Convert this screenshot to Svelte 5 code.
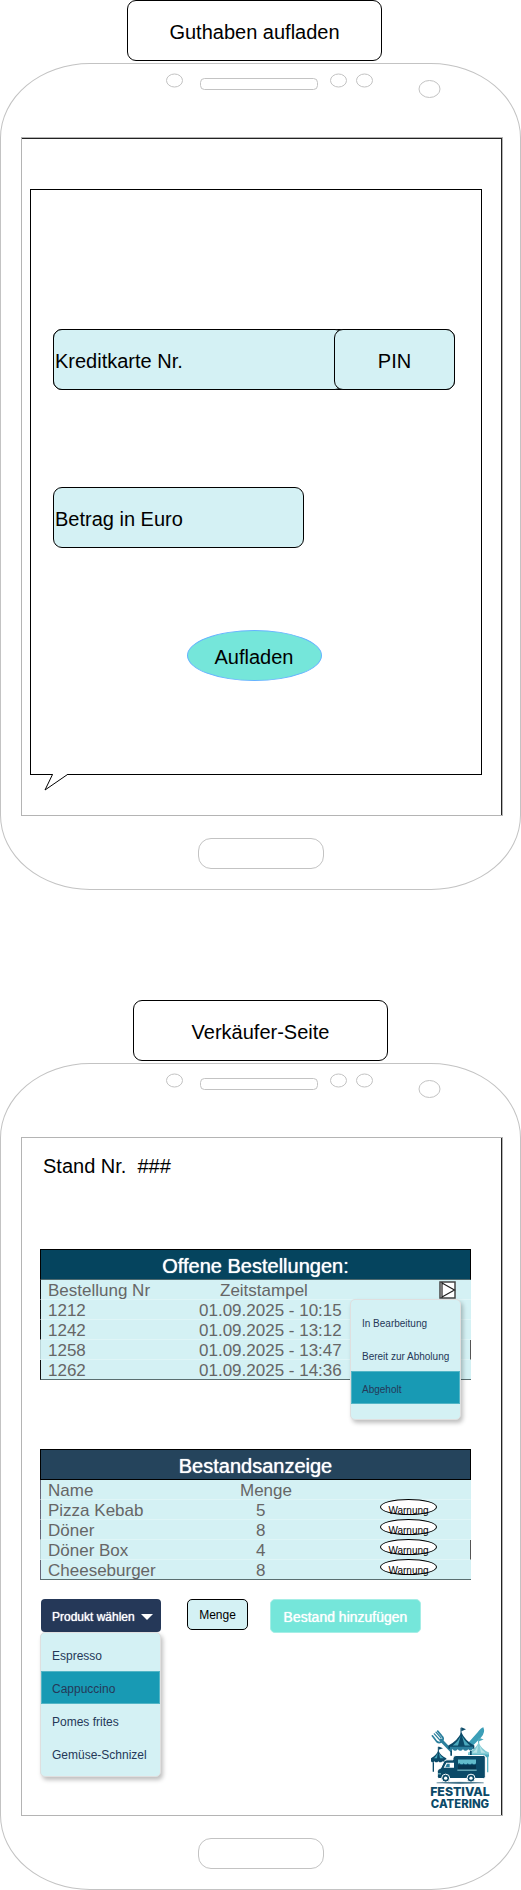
<script>
  const orders = [
    { nr: '1212', time: '01.09.2025 - 10:15' },
    { nr: '1242', time: '01.09.2025 - 13:12' },
    { nr: '1258', time: '01.09.2025 - 13:47' },
    { nr: '1262', time: '01.09.2025 - 14:36' }
  ];
  const stock = [
    { name: 'Pizza Kebab', amount: 5 },
    { name: 'Döner', amount: 8 },
    { name: 'Döner Box', amount: 4 },
    { name: 'Cheeseburger', amount: 8 }
  ];
  const statuses = ['In Bearbeitung', 'Bereit zur Abholung', 'Abgeholt'];
  const products = ['Espresso', 'Cappuccino', 'Pomes frites', 'Gemüse-Schnizel'];

  let statusOpen = $state(true);
  let status = $state('Abgeholt');
  let productOpen = $state(true);
  let product = $state('Cappuccino');
</script>

{#snippet sensors()}
  <svg class="sensors" viewBox="0 0 519 73" aria-hidden="true">
    <g fill="#fff" stroke="#c3c3c3">
      <ellipse cx="173.5" cy="16.5" rx="8" ry="6.5" />
      <rect x="199.5" y="14.5" width="117" height="11" rx="4" />
      <ellipse cx="337.5" cy="16.5" rx="8" ry="6.5" />
      <ellipse cx="363.5" cy="16.5" rx="8" ry="6.5" />
      <ellipse cx="428.5" cy="25" rx="10.5" ry="8.5" />
    </g>
  </svg>
{/snippet}

<main>
  <section>
    <h1 class="title first">Guthaben aufladen</h1>
    <div class="phone">
      {@render sensors()}
      <div class="screen dark-top">
        <form class="bubble" onsubmit={(e) => e.preventDefault()}>
          <div class="card-row">
            <input class="field" type="text" placeholder="Kreditkarte Nr." aria-label="Kreditkarte Nr." />
            <input class="field pin" type="text" placeholder="PIN" aria-label="PIN" />
          </div>
          <input class="field amount" type="text" placeholder="Betrag in Euro" aria-label="Betrag in Euro" />
          <button class="charge" type="submit">Aufladen</button>
          <svg class="tail" width="26" height="18" viewBox="0 0 26 18" aria-hidden="true">
            <path d="M9 0H23V2H9z" fill="#fff" />
            <path d="M8.500 1.500L1 17L23.500 1.500" fill="#fff" stroke="#000" />
          </svg>
        </form>
      </div>
      <div class="home"></div>
    </div>
  </section>

  <section>
    <h1 class="title">Verkäufer-Seite</h1>
    <div class="phone">
      {@render sensors()}
      <div class="screen seller">
        <p class="stand">Stand Nr.&nbsp; ###</p>

        <div class="orders">
          <table>
            <colgroup><col class="order-nr" /><col /><col class="order-status" /></colgroup>
            <thead>
              <tr><th class="head" colspan="3">Offene Bestellungen:</th></tr>
              <tr class="cols">
                <th>Bestellung Nr</th>
                <th class="stamp">Zeitstampel</th>
                <th></th>
              </tr>
            </thead>
            <tbody>
              {#each orders as o}
                <tr><td>{o.nr}</td><td>{o.time}</td><td></td></tr>
              {/each}
            </tbody>
          </table>
          <div class="status">
            <button class="play" type="button" aria-label="Status" aria-expanded={statusOpen} onclick={() => (statusOpen = !statusOpen)}>
              <svg width="17" height="18" viewBox="0 0 17 18" aria-hidden="true">
                <rect x="1" y="1" width="15" height="16" fill="#fff" stroke="#444" stroke-width="1.500" />
                <path d="M3 1V17M3 2L15.500 9L3 16" fill="none" stroke="#222" stroke-width="1.200" />
              </svg>
            </button>
            {#if statusOpen}
              <ul class="menu small">
                {#each statuses as s}
                  <li><button type="button" class:active={s === status} onclick={() => (status = s)}>{s}</button></li>
                {/each}
              </ul>
            {/if}
          </div>
        </div>

        <table class="stock">
          <colgroup><col class="item" /><col /><col class="item-state" /></colgroup>
          <thead>
            <tr><th class="head" colspan="3">Bestandsanzeige</th></tr>
            <tr class="cols">
              <th>Name</th>
              <th class="amount-head">Menge</th>
              <th></th>
            </tr>
          </thead>
          <tbody>
            {#each stock as s}
              <tr>
                <td>{s.name}</td>
                <td class="num">{s.amount}</td>
                <td class="warn-cell"><span class="warn">Warnung</span></td>
              </tr>
            {/each}
          </tbody>
        </table>

        <div class="toolbar">
          <div class="picker">
            <button class="pick" type="button" aria-expanded={productOpen} onclick={() => (productOpen = !productOpen)}>
              Produkt wählen
              <svg width="12" height="6" viewBox="0 0 12 6" aria-hidden="true"><path d="M0 0H12L6 6z" fill="#fff" /></svg>
            </button>
            {#if productOpen}
              <ul class="menu">
                {#each products as p}
                  <li><button type="button" class:active={p === product} onclick={() => (product = p)}>{p}</button></li>
                {/each}
              </ul>
            {/if}
          </div>
          <input class="qty" type="text" placeholder="Menge" aria-label="Menge" />
          <button class="add" type="button">Bestand hinzufügen</button>
        </div>

        <svg class="logo" width="62" height="85" viewBox="40 36 186 254" role="img" aria-label="Festival Catering">
          <!-- fork -->
          <g fill="none" stroke="#2b7f9d" stroke-linecap="round">
            <path d="M50 65L63 82Q72 89 80 80Q86 72 78 65L66 51" stroke-width="5" />
            <path d="M56 59L72 77M61 54L76 71" stroke-width="4" />
            <path d="M76 78L105 108" stroke-width="9" />
          </g>
          <!-- knife -->
          <path d="M203 39Q210 54 196 70L172 94L158 86L186 54Q196 41 203 39z" fill="#3c9fb8" />
          <!-- left tent -->
          <path d="M68 98V112" stroke="#0b4a68" stroke-width="3" />
          <path d="M69 97L82 102L69 107z" fill="#0b4a68" />
          <path d="M68 108Q63 122 46 132V141Q51 148 56 141Q62 148 68 141Q74 148 80 141Q86 148 92 140V132Q74 124 68 108z" fill="#0b4a68" />
          <path d="M66 116Q63 126 55 132H64zM70 116Q75 128 84 132H73z" fill="#4aa9bd" />
          <path d="M53 144V173" stroke="#0b4a68" stroke-width="4" />
          <!-- right tent -->
          <path d="M189 72V88" stroke="#4aa9bd" stroke-width="3" />
          <path d="M190 71L204 76L190 81z" fill="#4aa9bd" />
          <path d="M189 84Q181 104 157 115V124H220V115Q197 105 189 84z" fill="#83cbd5" />
          <path d="M187 93Q182 107 170 116H184zM192 94Q197 108 209 116H196z" fill="#b9e5e8" />
          <path d="M157 121H220V126Q214 133 208 126Q201 133 195 126H157z" fill="#4aa9bd" />
          <path d="M216 128V174" stroke="#5cb6c6" stroke-width="4" />
          <!-- middle tent -->
          <path d="M136 41V60" stroke="#0b4a68" stroke-width="3" />
          <path d="M137 39L151 45L137 51z" fill="#0b4a68" />
          <path d="M137 54Q127 78 98 94V104H176V94Q148 79 137 54z" fill="#0b4a68" />
          <path d="M135 65Q128 82 111 94H127zM139 65Q149 84 164 94H147z" fill="#4aa9bd" />
          <path d="M103 98H172V104Q165 113 158 105Q149 114 142 105Q134 114 126 105Q118 114 111 105L103 108z" fill="#2b7f9d" />
          <path d="M104 110H109V125H104zM163 110H168V125H163z" fill="#0b4a68" />
          <!-- truck -->
          <path d="M121 124H204Q209 124 209 129V188Q209 193 204 193H70Q65 193 65 188V171Q66 164 75 162L84 143Q87 137 94 137H112V132Q112 124 121 124z" fill="#0b4a68" stroke="#fff" stroke-width="3" />
          <path d="M92 146H115V161H84z" fill="#fff" />
          <path d="M94 149H102V159H89z" fill="#2b7f9d" />
          <path d="M127 136H181V147Q175 154 169 147Q163 154 156 147Q150 154 144 147Q138 154 132 147L127 149z" fill="#62bccb" />
          <path d="M127 153H181V166H127z" fill="#07364f" />
          <path d="M125 168H183" stroke="#8fd0d8" stroke-width="3" />
          <path d="M67 179H76" stroke="#8fd0d8" stroke-width="3" />
          <circle cx="90" cy="192" r="12" fill="#0b4a68" stroke="#fff" stroke-width="3" />
          <circle cx="90" cy="192" r="5" fill="#fff" />
          <circle cx="166" cy="192" r="12" fill="#0b4a68" stroke="#fff" stroke-width="3" />
          <circle cx="166" cy="192" r="5" fill="#fff" />
          <path d="M63 206Q130 202 204 206Q130 210 63 206z" fill="#0b4a68" stroke="#0b4a68" />
          <text x="133" y="247" font-size="37" text-anchor="middle">FESTIVAL</text>
          <text x="133" y="281" font-size="34" text-anchor="middle">CATERING</text>
        </svg>
      </div>
      <div class="home"></div>
    </div>
  </section>
</main>

<style>
  :global(body) {
    background: #fff;
  }
  main {
    display: flex;
    flex-direction: column;
    gap: 110px;
    font-family: 'Liberation Sans', Arial, sans-serif;
    color: #000;
  }
  main * {
    box-sizing: border-box;
  }
  button,
  input {
    font-family: inherit;
    margin: 0;
    padding: 0;
    border: 0;
    background: none;
    color: inherit;
    border-radius: 0;
  }
  button {
    cursor: pointer;
  }
  input::placeholder {
    color: #000;
    opacity: 1;
  }
  section {
    display: flex;
    flex-direction: column;
    align-items: center;
    gap: 2px;
  }
  .title {
    margin: 0;
    width: 255px;
    padding: 19px 0 16px;
    border: 1px solid #000;
    border-radius: 9px;
    font-size: 20px;
    font-weight: 400;
    line-height: 24px;
    text-align: center;
  }
  .title.first {
    margin-right: 12px;
  }
  .phone {
    width: 100%;
    display: flex;
    flex-direction: column;
    border: 1px solid #c3c3c3;
    border-radius: 90px / 75px;
  }
  .sensors {
    display: block;
    width: 100%;
    height: 73px;
  }
  .screen {
    margin: 0 17px 0 20px;
    border: 1px solid #b4b4b4;
    box-shadow: inset -1px 0 0 #222;
  }
  .screen.dark-top {
    box-shadow: inset -1px 1px 0 #222;
    padding: 51px 20px 40px 8px;
  }
  .home {
    width: 126px;
    height: 31px;
    margin: 22px auto 20px;
    border: 1px solid #c3c3c3;
    border-radius: 13px;
  }

  .bubble {
    position: relative;
    display: flex;
    flex-direction: column;
    align-items: flex-start;
    padding: 139px 26px 93px 22px;
    border: 1px solid #000;
  }
  .card-row {
    align-self: stretch;
    display: flex;
    margin-bottom: 97px;
    background: #d4f1f4;
    border: 1px solid #000;
    border-radius: 9px;
  }
  .field {
    height: 61px;
    padding: 3px 1px 0;
    font-size: 20px;
    background: #d4f1f4;
    border: 1px solid #000;
    border-radius: 9px;
  }
  .card-row .field {
    flex: 1;
    min-width: 0;
    margin: -1px;
  }
  .card-row .pin {
    flex: 0 0 121px;
    margin-left: -9px;
    text-align: center;
  }
  .amount {
    width: 251px;
    margin-bottom: 82px;
  }
  .charge {
    align-self: center;
    width: 135px;
    height: 51px;
    padding-top: 3px;
    font-size: 20px;
    background: #75e6da;
    border: 1px solid #66b2ff;
    border-radius: 50%;
  }
  .tail {
    position: absolute;
    left: 13px;
    top: calc(100% - 1px);
  }

  .seller {
    display: flex;
    flex-direction: column;
    padding: 16px 31px 4px 18px;
  }
  .stand {
    margin: 0 0 71px 3px;
    font-size: 20px;
    line-height: 24px;
  }
  .orders {
    position: relative;
    margin-bottom: 69px;
  }
  table {
    width: 100%;
    table-layout: fixed;
    border-collapse: separate;
    border-spacing: 0;
    background: #d4f1f4;
    color: #666;
    font-size: 17px;
    line-height: 17px;
  }
  th,
  td {
    height: 20px;
    padding: 2px 0 0;
    font-weight: 400;
    text-align: left;
    white-space: nowrap;
    border-bottom: 1px solid #e0f5f7;
  }
  .head {
    height: 31px;
    padding-top: 3px;
    background: #05445e;
    color: #fff;
    font-size: 20px;
    line-height: 24px;
    text-align: center;
    text-shadow: 0 0 1px #fff;
    border: 1px solid #000;
    border-bottom-color: #4f6a70;
  }
  .order-nr {
    width: 159px;
  }
  .order-status {
    width: 120px;
  }
  .item {
    width: 200px;
  }
  .item-state {
    width: 157px;
  }
  .cols .stamp {
    padding-left: 21px;
  }
  tr > :first-child:not(.head) {
    padding-left: 7px;
    border-left: 1px solid #111;
  }
  tbody tr:nth-child(3) > :first-child:not(.head) {
    border-left-color: #b9d3d6;
  }
  tbody tr:nth-child(3) > :last-child {
    border-right: 1px solid #555;
  }
  tbody tr:last-child td {
    border-bottom-color: #5a6e70;
  }
  .stock {
    margin-bottom: 19px;
  }
  .stock .head {
    background: #25445c;
    border-bottom-color: #000;
  }
  .stock .num {
    padding-left: 16px;
  }
  .stock tr > :first-child:not(.head) {
    border-left-color: #667;
  }
  .stock tbody tr:nth-child(3) > :first-child {
    border-left-color: #b9d3d6;
  }
  td.warn-cell {
    padding: 0 0 0 66px;
  }
  .warn {
    display: block;
    width: 57px;
    height: 16px;
    margin: -1px 0 4px;
    padding-top: 3px;
    color: #000;
    background: #fff;
    border: 1px solid #000;
    border-radius: 50%;
    font-size: 10px;
    line-height: 15px;
    text-align: center;
  }

  .status {
    position: absolute;
    top: 32px;
    right: 10px;
    display: flex;
    flex-direction: column;
    align-items: flex-end;
  }
  .play {
    height: 18px;
    margin-right: 5px;
  }
  .play svg {
    display: block;
  }
  .menu {
    width: 121px;
    margin: 0;
    padding: 5px 0 6px;
    list-style: none;
    background: #d4f1f4;
    border: 1px solid #dfdfdf;
    border-radius: 5px;
    box-shadow: 2px 3px 4px #00000040;
    font-size: 12px;
    color: #253858;
  }
  .menu.small {
    width: 111px;
    padding: 5px 0 15px;
    font-size: 10px;
  }
  .menu button {
    display: block;
    width: 100%;
    height: 33px;
    padding: 2px 0 0 11px;
    font-size: inherit;
    text-align: left;
    white-space: nowrap;
  }
  .menu.small button {
    padding-top: 4px;
  }
  .menu .active {
    background: #189ab4;
    box-shadow: inset 0 0 0 1px #52b5c6;
  }
  .toolbar {
    display: flex;
    align-items: flex-start;
    gap: 22px;
    margin-bottom: 93px;
  }
  .picker {
    position: relative;
    width: 121px;
    margin-right: 4px;
  }
  .picker .menu {
    position: absolute;
    top: 100%;
    left: 0;
  }
  .pick {
    display: flex;
    align-items: center;
    justify-content: space-between;
    width: 120px;
    height: 33px;
    margin-left: 1px;
    padding: 2px 8px 0 11px;
    background: #253858;
    border-radius: 4px;
    color: #fff;
    font-size: 12px;
    text-shadow: 0 0 1px #fff;
    white-space: nowrap;
  }
  .qty {
    width: 61px;
    height: 31px;
    font-size: 12px;
    text-align: center;
    background: #d4f1f4;
    border: 1px solid #000;
    border-radius: 5px;
  }
  .add {
    width: 151px;
    height: 34px;
    padding-top: 2px;
    background: #75e6da;
    border: 1px solid #a5eee6;
    border-radius: 5px;
    color: #fff;
    font-size: 14px;
    text-shadow: 0 0 1px #fff;
    white-space: nowrap;
  }
  .logo {
    display: block;
    align-self: flex-end;
    margin-right: -20px;
  }
  .logo text {
    font-family: Inter, 'Open Sans', sans-serif;
    font-weight: 800;
    fill: #0b4a68;
  }
</style>
